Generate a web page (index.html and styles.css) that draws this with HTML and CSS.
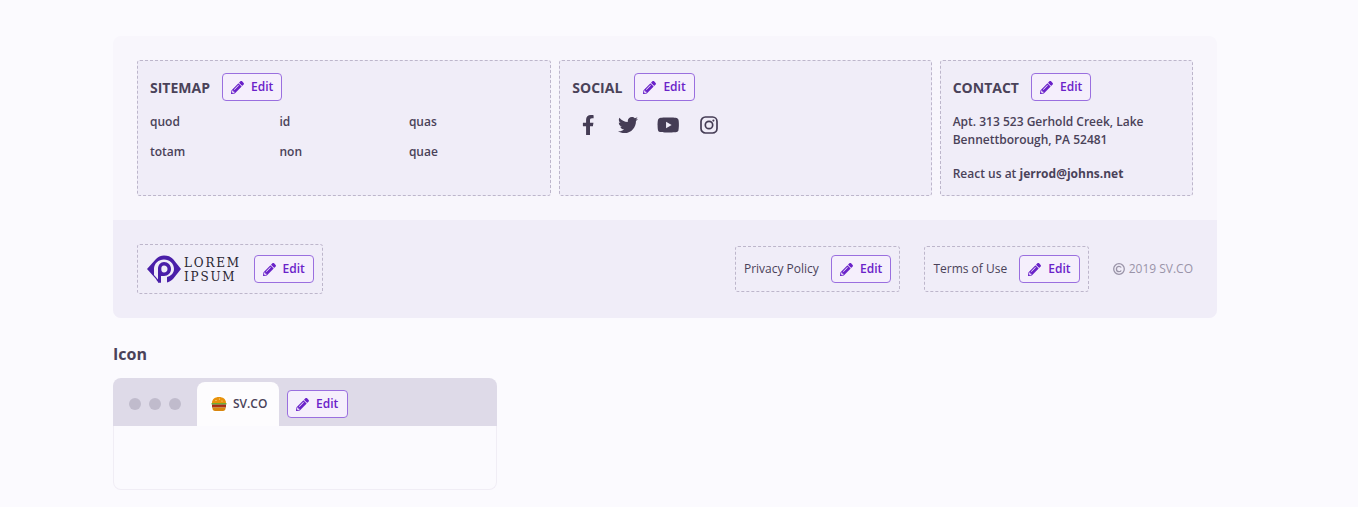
FILE: index.html
```html
<!DOCTYPE html>
<html lang="en">
<head>
<meta charset="utf-8">
<title>Footer editor</title>
<link rel="stylesheet" href="styles.css">
</head>
<body>
<svg class="defs" width="0" height="0" aria-hidden="true">
  <symbol id="pencil" viewBox="0 0 512 512"><path d="M497.9 142.1l-46.1 46.1c-4.7 4.7-12.3 4.7-17 0l-111-111c-4.7-4.7-4.7-12.3 0-17l46.1-46.1c18.7-18.7 49.1-18.7 67.9 0l60.1 60.1c18.8 18.7 18.8 49.1 0 67.9zM284.2 99.8L21.6 362.4.4 483.9c-2.9 16.4 11.4 30.6 27.8 27.8l121.5-21.3 262.6-262.6c4.7-4.7 4.7-12.3 0-17l-111-111c-4.8-4.7-12.4-4.7-17.1 0zM124.1 339.9c-5.5-5.5-5.5-14.3 0-19.8l154-154c5.5-5.5 14.3-5.5 19.8 0s5.5 14.3 0 19.8l-154 154c-5.5 5.5-14.3 5.5-19.8 0zM88 424h48v36.3l-64.5 11.3-31.1-31.1L51.7 376H88v48z"/></symbol>
</svg>
<main class="page">
  <section class="footer-card">
    <div class="footer-top">
      <div class="zone">
        <div class="zone-head"><h3 class="zone-title">SITEMAP</h3><button class="edit"><svg class="pencil"><use href="#pencil"/></svg>Edit</button></div>
        <div class="links">
          <a class="link">quod</a><a class="link">id</a><a class="link">quas</a>
          <a class="link">totam</a><a class="link">non</a><a class="link">quae</a>
        </div>
      </div>
      <div class="zone">
        <div class="zone-head"><h3 class="zone-title">SOCIAL</h3><button class="edit"><svg class="pencil"><use href="#pencil"/></svg>Edit</button></div>
        <div class="socials">
          <svg class="social social-fb" viewBox="0 0 320 512"><path d="M279.14 288l14.22-92.66h-88.91v-60.13c0-25.35 12.42-50.06 52.24-50.06h40.42V6.26S260.43 0 225.36 0c-73.22 0-121.08 44.38-121.08 124.72v70.62H22.89V288h81.39v224h100.17V288z"/></svg>
          <svg class="social social-tw" viewBox="0 0 512 512"><path d="M459.37 151.716c.325 4.548.325 9.097.325 13.645 0 138.72-105.583 298.558-298.558 298.558-59.452 0-114.68-17.219-161.137-47.106 8.447.974 16.568 1.299 25.34 1.299 49.055 0 94.213-16.568 130.274-44.832-46.132-.975-84.792-31.188-98.112-72.772 6.498.974 12.995 1.624 19.818 1.624 9.421 0 18.843-1.3 27.614-3.573-48.081-9.747-84.143-51.98-84.143-102.985v-1.299c13.969 7.797 30.214 12.67 47.431 13.319-28.264-18.843-46.781-51.005-46.781-87.391 0-19.492 5.197-37.36 14.294-52.954 51.655 63.675 129.3 105.258 216.365 109.807-1.624-7.797-2.599-15.918-2.599-24.04 0-57.828 46.782-104.934 104.934-104.934 30.213 0 57.502 12.67 76.67 33.137 23.715-4.548 46.456-13.645 66.599-25.666-7.798 24.366-24.366 44.833-46.132 57.827 21.117-2.273 41.584-8.122 60.426-16.243-14.292 20.791-32.161 39.308-52.628 54.253z"/></svg>
          <svg class="social social-yt" viewBox="0 0 576 512"><path d="M549.655 124.083c-6.281-23.65-24.787-42.276-48.284-48.597C458.781 64 288 64 288 64S117.22 64 74.629 75.486c-23.497 6.322-42.003 24.947-48.284 48.597-11.412 42.867-11.412 132.305-11.412 132.305s0 89.438 11.412 132.305c6.281 23.65 24.787 41.5 48.284 47.821C117.22 448 288 448 288 448s170.78 0 213.371-11.486c23.497-6.321 42.003-24.171 48.284-47.821 11.412-42.867 11.412-132.305 11.412-132.305s0-89.438-11.412-132.305zm-317.51 213.508V175.185l142.739 81.205-142.739 81.201z"/></svg>
          <svg class="social social-ig" viewBox="0 0 18 18"><rect x="1" y="1" width="16" height="16" rx="4.4" class="ig-line"/><circle cx="9" cy="9" r="3.7" class="ig-line"/><circle cx="13.4" cy="4.6" r="1.05"/></svg>
        </div>
      </div>
      <div class="zone">
        <div class="zone-head"><h3 class="zone-title">CONTACT</h3><button class="edit"><svg class="pencil"><use href="#pencil"/></svg>Edit</button></div>
        <p class="address">Apt. 313 523 Gerhold Creek, Lake Bennettborough, PA 52481</p>
        <p class="reach">React us at <strong>jerrod@johns.net</strong></p>
      </div>
    </div>
    <div class="footer-bottom">
      <div class="zone-inline zone-logo">
        <div class="logo">
          <svg class="logo-mark" viewBox="0 0 34 28">
            <path class="logo-eye" fill-rule="evenodd" d="M0 14 L9 4 C12 1 14 .5 17 .5 C21 .5 23.500 1.500 26 4 L34 14 L26 24 C24 26 22 27 20 27.500 L20 22 C24 21 27 18 27 14 C27 8.500 22.500 4.500 17 4.500 C11.500 4.500 7 8.500 7 14 L7 20 L11 24.500 L11 27 C10 26 9.500 25 9 24 Z"/>
            <path class="logo-eye" fill-rule="evenodd" d="M17 7 C21 7 24 10 24 14 C24 18 21 21 17 21 L14 21 L14 27.800 L11 27.800 L11 14 C11 10 13.500 7 17 7 Z M17 10.500 C15 10.500 14.300 12 14.300 14 C14.300 16 15 17.500 17 17.500 C19 17.500 20.500 16 20.500 14 C20.500 12 19 10.500 17 10.500 Z"/>
          </svg>
          <div class="logo-text"><span>LOREM</span><span>IPSUM</span></div>
        </div>
        <button class="edit"><svg class="pencil"><use href="#pencil"/></svg>Edit</button>
      </div>
      <div class="footer-right">
        <div class="zone-inline"><span class="policy">Privacy Policy</span><button class="edit"><svg class="pencil"><use href="#pencil"/></svg>Edit</button></div>
        <div class="zone-inline"><span class="policy">Terms of Use</span><button class="edit"><svg class="pencil"><use href="#pencil"/></svg>Edit</button></div>
        <span class="copyright"><svg class="copy-icon" viewBox="0 0 12 12"><circle cx="6" cy="6" r="5.300"/><path d="M8.200 4.500C7.700 3.700 6.900 3.300 6 3.300c-1.500 0-2.600 1.200-2.600 2.700S4.500 8.700 6 8.700c.9 0 1.700-.4 2.200-1.200"/></svg>2019 SV.CO</span>
      </div>
    </div>
  </section>

  <h2 class="section-title">Icon</h2>
  <section class="browser">
    <div class="browser-bar">
      <div class="dots"><i class="dot"></i><i class="dot"></i><i class="dot"></i></div>
      <div class="tab">
        <svg class="burger" viewBox="0 0 16 16">
          <path d="M1 7C1 3 4 1 8 1s7 2 7 6z" fill="#e8920c"/>
          <path d="M.5 7h15v1.500H.5z" fill="#6fae2e"/>
          <path d="M1 8.500h14v3H1z" fill="#6e2a12"/>
          <path d="M1 9.500h14v1.200H1z" fill="#d0341c"/>
          <path d="M1.500 11.500h13v1c0 1.500-1 2.500-2.500 2.500H4c-1.500 0-2.500-1-2.500-2.500z" fill="#d9860f"/>
          <circle cx="5" cy="4.500" r=".6" fill="#fbe3a8"/><circle cx="8.500" cy="3" r=".6" fill="#fbe3a8"/><circle cx="11" cy="5" r=".6" fill="#fbe3a8"/>
        </svg>
        <span class="tab-label">SV.CO</span>
      </div>
      <button class="edit"><svg class="pencil"><use href="#pencil"/></svg>Edit</button>
    </div>
    <div class="browser-body"></div>
  </section>
</main>
</body>
</html>
```
FILE: styles.css
```css
* { box-sizing: border-box; }
html, body { margin: 0; padding: 0; }
body {
  background: #fbfafe;
  font-family: "Open Sans", "Liberation Sans", sans-serif;
  color: #4a4259;
  height: 507px;
  overflow: hidden;
}
.defs { position: absolute; }
.page { width: 1104px; margin-left: 113px; padding-top: 36px; }

.footer-card { border-radius: 8px; overflow: hidden; background: #f8f6fc; }
.footer-top {
  display: grid;
  grid-template-columns: 414.330px 372.370px 1fr;
  gap: 8px;
  padding: 24px 24px;
}
.zone {
  height: 136px;
  padding: 12px;
  background: #f0edf8;
  border: 1px dashed #bdb6cb;
  border-radius: 3px;
}
.zone-head { display: flex; align-items: center; gap: 12px; height: 28px; margin-bottom: 12px; }
.zone-title { margin: 2px 0 0; font-size: 14px; line-height: 20px; font-weight: 700; color: #4a4259; }

.edit {
  display: inline-flex;
  align-items: center;
  justify-content: center;
  gap: 7px;
  width: 60.500px;
  height: 28px;
  padding: 0;
  flex: none;
  background: #f5effc;
  border: 1px solid #9a6fdf;
  border-radius: 4px;
  color: #6a22c9;
  font: 600 12px/16px "Open Sans", sans-serif;
}
.pencil { width: 13px; height: 13px; fill: #6a22c9; flex: none; }

.links { display: grid; grid-template-columns: repeat(3, 1fr); row-gap: 12px; }
.link { font-size: 12px; line-height: 18px; font-weight: 600; color: #4a4259; }

.socials { display: flex; align-items: center; height: 24px; }
.social { height: 20px; fill: #453d55; flex: none; }
.social-fb { width: 12.500px; margin-left: 10.170px; }
.social-tw { width: 20px; margin-left: 23px; }
.social-yt { width: 22.500px; margin-left: 19.500px; }
.social-ig { width: 18px; height: 18px; margin-left: 20px; }
.ig-line { fill: none; stroke: #453d55; stroke-width: 1.700; }

.address { margin: 0; font-size: 12px; line-height: 18px; font-weight: 600; width: 200px; }
.reach { margin: 16px 0 0; font-size: 12px; line-height: 18px; font-weight: 600; }
.reach strong { font-weight: 700; }

.footer-bottom {
  display: flex;
  align-items: center;
  justify-content: space-between;
  height: 98px;
  padding: 0 24px;
  background: #f0edf8;
}
.zone-inline {
  display: flex;
  align-items: center;
  gap: 12px;
  height: 46px;
  padding: 0 8px;
  border: 1px dashed #bdb6cb;
  border-radius: 3px;
}
.zone-logo { height: 50px; width: 186px; padding: 0 8px 0 9px; justify-content: space-between; }
.logo { display: flex; align-items: center; gap: 3px; }
.logo-mark { width: 34px; height: 28px; }
.logo-eye { fill: #4a1fa8; }
.logo-text {
  display: flex;
  flex-direction: column;
  padding-top: 2px;
  font-family: "DejaVu Serif", "Liberation Serif", serif;
  font-size: 12px;
  line-height: 14px;
  letter-spacing: 1.800px;
  color: #2a2630;
}
.footer-right { display: flex; align-items: center; }
.footer-right .zone-inline + .zone-inline { margin-left: 24px; }
.policy { font-size: 12px; line-height: 18px; color: #4a4259; }
.copyright { display: flex; align-items: center; gap: 4px; margin-left: 24px; font-size: 12px; line-height: 18px; color: #9a94a8; }
.copy-icon { width: 12px; height: 12px; fill: none; stroke: #9a94a8; stroke-width: 1.300; }

.section-title { margin: 26px 0 14px; font-size: 16px; line-height: 20px; font-weight: 700; color: #4a4259; height: 20px; }
.browser { width: 384px; }
.browser-bar {
  display: flex;
  align-items: flex-end;
  height: 48px;
  background: #dedae8;
  border-radius: 8px 8px 0 0;
}
.dots { display: flex; gap: 8px; padding-left: 16px; width: 84px; height: 44px; align-items: center; }
.dot { width: 12px; height: 12px; border-radius: 50%; background: #c0bbcc; }
.tab {
  display: flex;
  align-items: center;
  gap: 6px;
  width: 82px;
  height: 44px;
  padding-left: 14px;
  background: #fdfcfe;
  border-radius: 8px 8px 0 0;
}
.burger { width: 16px; height: 16px; background: #fff; }
.tab-label { font-size: 12px; line-height: 18px; font-weight: 600; color: #4a4259; }
.browser-bar .edit { margin: 0 0 8px 8px; }
.browser-body {
  height: 64px;
  background: #fbfafe;
  border: 1px solid #f0edf5;
  border-top: 0;
  border-radius: 0 0 8px 8px;
}
```
